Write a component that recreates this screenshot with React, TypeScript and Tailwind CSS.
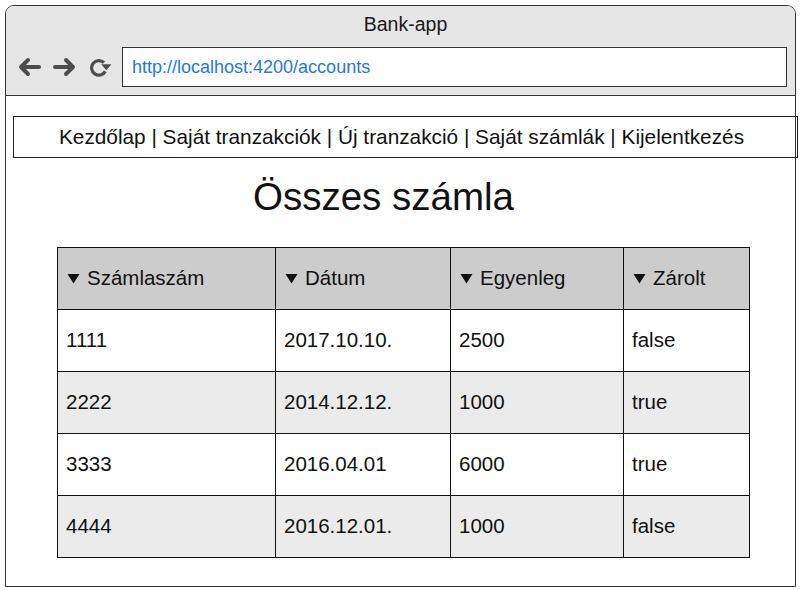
import React from "react";

const rows = [
  ["1111", "2017.10.10.", "2500", "false"],
  ["2222", "2014.12.12.", "1000", "true"],
  ["3333", "2016.04.01", "6000", "true"],
  ["4444", "2016.12.01.", "1000", "false"],
];

const headers = ["Számlaszám", "Dátum", "Egyenleg", "Zárolt"];

function BackIcon() {
  return (
    <svg width="24" height="20" viewBox="0 0 24 20">
      <path d="M22 10H4 M11 3 L4 10 L11 17" fill="none" stroke="#4d4d4d" strokeWidth="4" strokeLinecap="round" strokeLinejoin="round" />
    </svg>
  );
}

function ForwardIcon() {
  return (
    <svg width="24" height="20" viewBox="0 0 24 20">
      <path d="M2 10H20 M13 3 L20 10 L13 17" fill="none" stroke="#4d4d4d" strokeWidth="4" strokeLinecap="round" strokeLinejoin="round" />
    </svg>
  );
}

function RefreshIcon() {
  return (
    <svg width="23" height="20" viewBox="0 0 23 20">
      <path d="M15 5.6 A7.3 7.3 0 1 0 16.3 14.4" fill="none" stroke="#4d4d4d" strokeWidth="3.2" />
      <path d="M12.2 7.2 L22.4 7.2 L17.3 13.2 Z" fill="#4d4d4d" />
    </svg>
  );
}

function SortArrow() {
  return (
    <svg width="13" height="11" viewBox="0 0 13 11" className="shrink-0">
      <path d="M0.5 1 L12.5 1 L6.5 10.5 Z" fill="#111" />
    </svg>
  );
}

export default function App() {
  return (
    <div className="w-[801px] h-[590px] bg-white pl-[5px] pt-[5px] font-['Liberation_Sans',Arial,sans-serif] text-[#111]">
      <div className="w-[791px] h-[582px] border border-[#333] rounded-t-[9px] flex flex-col">
        {/* browser chrome */}
        <div className="h-[90px] bg-[#e6e6e6] border-b border-[#333] rounded-t-[8px]">
          <div className="h-[38px] flex items-center justify-center pl-[10px] text-[19.5px] text-[#1a1a1a]">
            Bank-app
          </div>
          <div className="mt-[3px] flex items-center pl-[11px]">
            <BackIcon />
            <div className="ml-[12px]">
              <ForwardIcon />
            </div>
            <div className="ml-[12px]">
              <RefreshIcon />
            </div>
            <div className="ml-[10px] w-[665px] h-[40px] bg-white border border-[#333] flex items-center pl-[9px] text-[18px] text-[#1f78e0]">
              http://localhost:4200/accounts
            </div>
          </div>
        </div>

        {/* page */}
        <div className="flex flex-col">
          <div className="ml-[7px] mt-[20px] w-[785px] h-[42px] border border-[#222] flex items-center justify-center pr-[8px] text-[20.8px]">
            Kezdőlap | Saját tranzakciók | Új tranzakció | Saját számlák | Kijelentkezés
          </div>
          <h1 className="mt-[19px] pl-[247px] text-[38.5px] leading-[40px] text-[#111]">Összes számla</h1>

          <div className="ml-[51px] mt-[30px] w-[693px] grid grid-cols-[218px_175px_173px_126px] border-l border-t border-[#111] text-[20.5px]">
            {headers.map((h) => (
              <div key={h} className="h-[62px] bg-[#cccccc] border-r border-b border-[#111] flex items-center gap-[7px] pl-[9px]">
                <SortArrow />
                <span>{h}</span>
              </div>
            ))}
            {rows.map((r, i) =>
              r.map((c, j) => (
                <div
                  key={i + "-" + j}
                  className={
                    "h-[62px] border-r border-b border-[#111] flex items-center pl-[8px] " +
                    (i % 2 === 1 ? "bg-[#ebebeb]" : "bg-white")
                  }
                >
                  {c}
                </div>
              ))
            )}
          </div>
        </div>
      </div>
    </div>
  );
}
